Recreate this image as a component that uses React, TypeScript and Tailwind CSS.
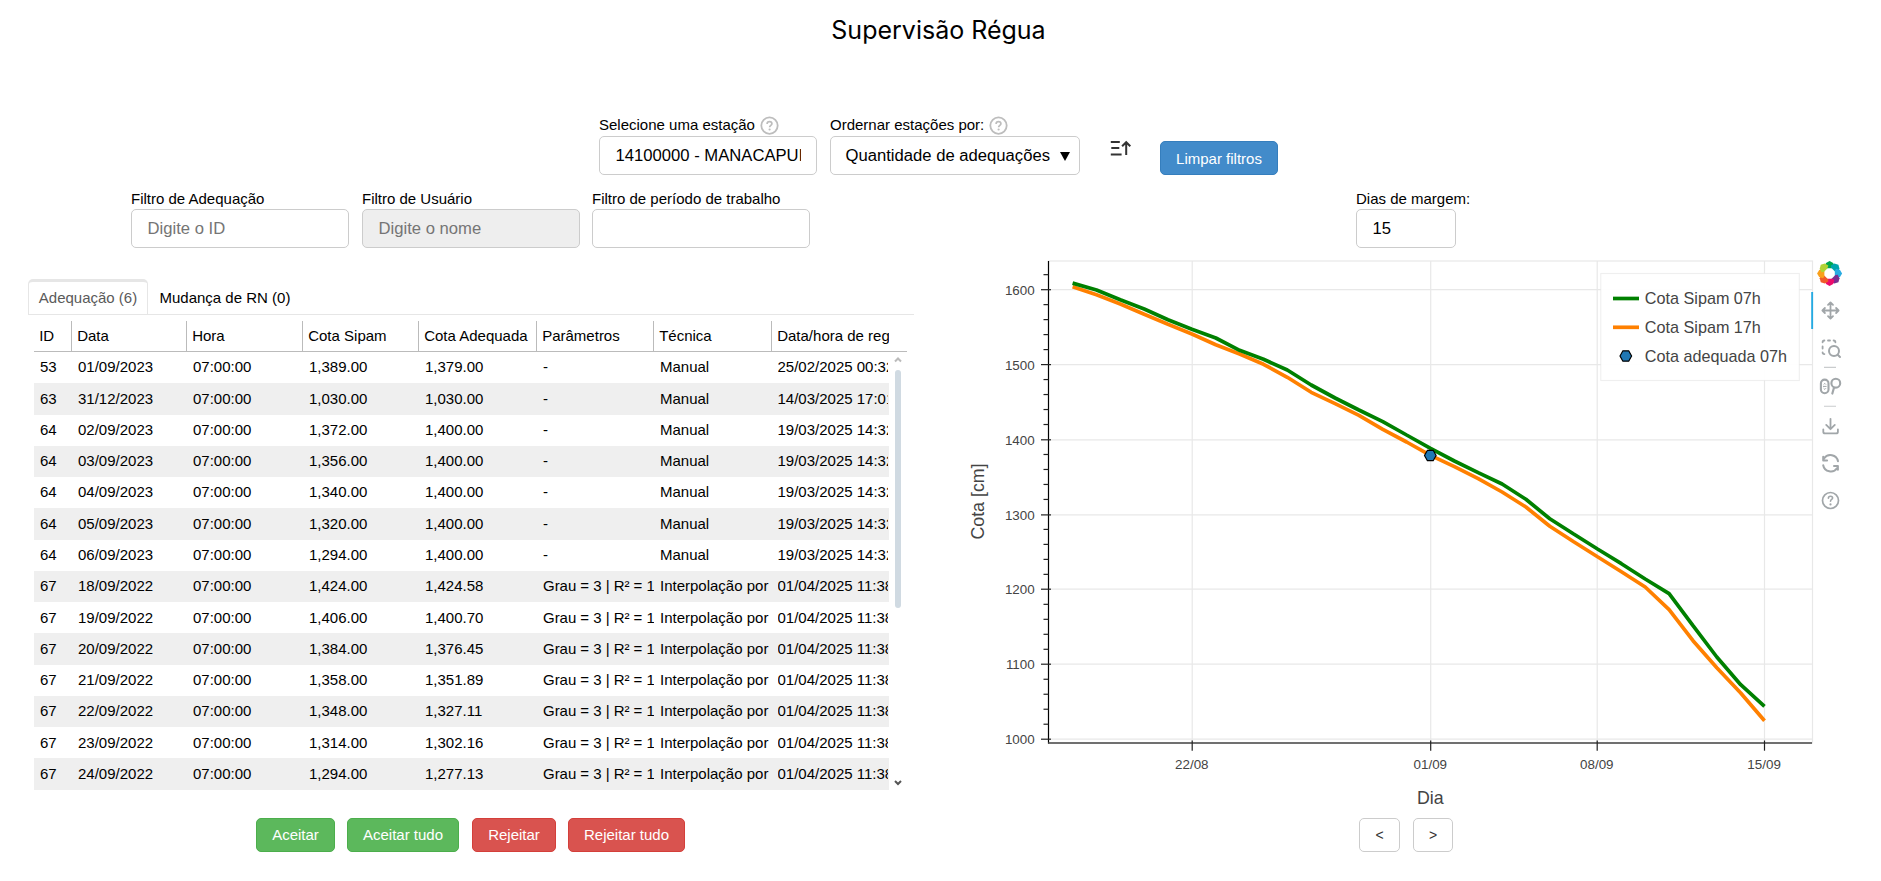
import React from 'react';

const X0 = 1072.6;
const DAY = 23.86;

const green = [283.1, 290, 299.7, 309, 319.7, 329.3, 338, 350.3, 359.3, 370, 385, 398, 410, 421.7, 435, 448.3, 461, 472.7, 484, 499.3, 518.7, 534, 549, 563.7, 579, 593.7, 625.7, 657, 684.7, 706.3];
const orange = [286.7, 294.7, 304, 314.3, 324.3, 334, 344.7, 354, 364.3, 377.3, 392.3, 403.7, 415.3, 429.3, 442, 455.3, 466.7, 478.7, 492, 507, 526.3, 541.7, 556.7, 571.7, 587, 609.7, 640.7, 667.7, 693, 720.7];
const toPoints = (ys: number[]) => ys.map((y, i) => `${(X0 + i * DAY).toFixed(1)},${y}`).join(' ');

const yMajor: [string, number][] = [
  ['1600', 289.7], ['1500', 364.6], ['1400', 439.8], ['1300', 514.9], ['1200', 589.2], ['1100', 664.2], ['1000', 739.2],
];
const xMajor: [string, number][] = [['22/08', 1192.2], ['01/09', 1430.7], ['08/09', 1597.2], ['15/09', 1764.5]];
const yMinor = Array.from({ length: 32 }, (_, i) => i).filter((i) => i % 5 !== 0).map((i) => 739.2 - i * 14.985);

const interp = 'Interpolação por';
const grau = 'Grau = 3 | R² = 1';
const rows: string[][] = [
  ['53', '01/09/2023', '07:00:00', '1,389.00', '1,379.00', '-', 'Manual', '25/02/2025 00:32'],
  ['63', '31/12/2023', '07:00:00', '1,030.00', '1,030.00', '-', 'Manual', '14/03/2025 17:01'],
  ['64', '02/09/2023', '07:00:00', '1,372.00', '1,400.00', '-', 'Manual', '19/03/2025 14:32'],
  ['64', '03/09/2023', '07:00:00', '1,356.00', '1,400.00', '-', 'Manual', '19/03/2025 14:32'],
  ['64', '04/09/2023', '07:00:00', '1,340.00', '1,400.00', '-', 'Manual', '19/03/2025 14:32'],
  ['64', '05/09/2023', '07:00:00', '1,320.00', '1,400.00', '-', 'Manual', '19/03/2025 14:32'],
  ['64', '06/09/2023', '07:00:00', '1,294.00', '1,400.00', '-', 'Manual', '19/03/2025 14:32'],
  ['67', '18/09/2022', '07:00:00', '1,424.00', '1,424.58', grau, interp, '01/04/2025 11:38'],
  ['67', '19/09/2022', '07:00:00', '1,406.00', '1,400.70', grau, interp, '01/04/2025 11:38'],
  ['67', '20/09/2022', '07:00:00', '1,384.00', '1,376.45', grau, interp, '01/04/2025 11:38'],
  ['67', '21/09/2022', '07:00:00', '1,358.00', '1,351.89', grau, interp, '01/04/2025 11:38'],
  ['67', '22/09/2022', '07:00:00', '1,348.00', '1,327.11', grau, interp, '01/04/2025 11:38'],
  ['67', '23/09/2022', '07:00:00', '1,314.00', '1,302.16', grau, interp, '01/04/2025 11:38'],
  ['67', '24/09/2022', '07:00:00', '1,294.00', '1,277.13', grau, interp, '01/04/2025 11:38'],
];
const headers = ['ID', 'Data', 'Hora', 'Cota Sipam', 'Cota Adequada', 'Parâmetros', 'Técnica', 'Data/hora de registro'];
const gridCols = 'grid grid-cols-[38px_115px_116px_116px_118px_117px_118px_117px]';

function Help() {
  return (
    <svg className="h-[20px] w-[20px] shrink-0" viewBox="0 0 20 20" fill="none">
      <circle cx="9.5" cy="9.6" r="8.2" stroke="#bdbdbd" strokeWidth="1.8" />
      <path d="M7.1 7.9c0-1.5 1-2.3 2.4-2.3s2.4.8 2.4 2.1c0 1.6-2.3 1.8-2.3 3.5" stroke="#bdbdbd" strokeWidth="1.7" />
      <circle cx="9.6" cy="13.5" r="1.1" fill="#bdbdbd" />
    </svg>
  );
}

function Field({ label, help, width, children }: { label: string; help?: boolean; width: string; children?: React.ReactNode }) {
  return (
    <div className={width}>
      <div className={`flex h-[21px] items-center gap-[5px] whitespace-nowrap text-[15px] ${help ? '' : 'pt-[1px]'}`}>
        {label}
        {help && <Help />}
      </div>
      {children}
    </div>
  );
}

const box = 'flex h-[39px] items-center rounded-[5px] border border-[#ccc] px-[15.5px] text-[16.65px] whitespace-nowrap';
const btn = 'flex h-[34px] items-center justify-center rounded-[5px] border text-[15px] text-white';

function Hex({ x, y }: { x: number; y: number }) {
  return (
    <polygon
      points="-5.8,0 -2.9,-5.2 2.9,-5.2 5.8,0 2.9,5.2 -2.9,5.2"
      transform={`translate(${x} ${y})`}
      fill="#1f77b4"
      stroke="#000"
      strokeWidth="1.2"
    />
  );
}

const petals = ['#00a650', '#00a5ad', '#29abe2', '#7a2d90', '#ec0b6c', '#f15a29', '#f9a01b', '#b2d234'];

function Chart() {
  return (
    <svg className="block h-[560px] w-[921px] shrink-0" viewBox="960 255 921 560" fontFamily="Liberation Sans, Arial, sans-serif">
      <rect x="1048.5" y="261" width="764" height="482" fill="#fff" stroke="#e8e8e8" strokeWidth="1.2" />
      <g stroke="#e8e8e8" strokeWidth="1.2">
        {yMajor.map(([t, y]) => <line key={t} x1="1048" x2="1812" y1={y} y2={y} />)}
        {xMajor.map(([t, x]) => <line key={t} x1={x} x2={x} y1="261" y2="743" />)}
      </g>
      <g stroke="#222" strokeWidth="1.2">
        <line x1="1048.5" x2="1048.5" y1="261" y2="743.5" stroke="#000" />
        <line x1="1048" x2="1812" y1="743" y2="743" stroke="#444" strokeWidth="1.5" />
        {yMajor.map(([t, y]) => <line key={t} x1="1041" x2="1051" y1={y} y2={y} />)}
        {yMinor.map((y) => <line key={y} x1="1043.5" x2="1048.5" y1={y} y2={y} />)}
        {xMajor.map(([t, x]) => <line key={t} x1={x} x2={x} y1="740.5" y2="750.7" />)}
      </g>
      <g fill="#444" fontSize="13.4">
        {yMajor.map(([t, y]) => <text key={t} x="1034.7" y={y + 5} textAnchor="end">{t}</text>)}
        {xMajor.map(([t, x]) => <text key={t} x={x - 0.4} y="769" textAnchor="middle">{t}</text>)}
      </g>
      <text x="1430.3" y="804" fill="#444" fontSize="17.8" textAnchor="middle">Dia</text>
      <text transform="translate(983.8 501.5) rotate(-90)" fill="#444" fontSize="17.8" textAnchor="middle">Cota [cm]</text>
      <g fill="none" strokeWidth="3.7" strokeLinejoin="bevel">
        <polyline points={toPoints(orange)} stroke="#ff8000" />
        <polyline points={toPoints(green)} stroke="#008000" />
      </g>
      <Hex x={1430.3} y={455.5} />

      <rect x="1600.8" y="273.5" width="198.5" height="107" fill="#fff" fillOpacity="0.95" stroke="#e5e5e5" strokeOpacity="0.6" strokeWidth="1.1" />
      <line x1="1613" x2="1639" y1="298.5" y2="298.5" stroke="#008000" strokeWidth="3.7" />
      <line x1="1613" x2="1639" y1="327.3" y2="327.3" stroke="#ff8000" strokeWidth="3.7" />
      <Hex x={1625.8} y={356} />
      <g fill="#444" fontSize="16.2">
        <text x="1644.8" y="304.3">Cota Sipam 07h</text>
        <text x="1644.8" y="333.3">Cota Sipam 17h</text>
        <text x="1644.8" y="362.3">Cota adequada 07h</text>
      </g>

      <g transform="translate(1829.6 273.5)">
        {petals.map((c, i) => (
          <path key={c} d="M-4.8 -6.6 L-3.6 -10.4 L0 -12.5 L3.6 -10.4 L4.8 -6.6 L2 -5.2 L-3 -5.2 Z" fill={c} transform={`rotate(${i * 45})`} />
        ))}
      </g>
      <rect x="1811.2" y="292" width="1.9" height="37" fill="#26aae1" />
      <g stroke="#a1a6a9" strokeWidth="1.8" fill="none" strokeLinecap="round" strokeLinejoin="round">
        <path d="M1822.6 310.5h15.8M1830.5 302.6v15.8M1828 304.9l2.5-2.5 2.5 2.5M1828 316.1l2.5 2.5 2.5-2.5M1824.9 308l-2.5 2.5 2.5 2.5M1836.1 308l2.5 2.5-2.5 2.5" />
        <path d="M1822.6 342.3q0-1.8 1.8-1.8M1828 340.5h2M1833.6 340.5q1.8 0 1.8 1.8M1822.6 346.5v2M1822.6 352.3q0 1.8 1.8 1.8" />
        <circle cx="1834" cy="351" r="5" strokeWidth="2" />
        <path d="M1837.7 354.7l2.3 2.3" strokeWidth="2" />
        <rect x="1820.9" y="379.6" width="7.6" height="13.6" rx="3.8" strokeWidth="2.1" />
        <circle cx="1835.8" cy="383.2" r="4.4" strokeWidth="2.1" />
        <path d="M1834 387.6l-1.7 6" strokeWidth="2.1" />
        <path d="M1823.4 386.4h2.8M1823.9 384.3l.9-.9.9.9M1823.9 388.5l.9.9.9-.9" strokeWidth="1" />
        <path d="M1823.3 429.3v2.4q0 1.7 1.7 1.7h11.2q1.7 0 1.7-1.7v-2.4M1830.5 418.8v10.2M1826.2 424.9l4.3 4.3 4.3-4.3" />
        <path d="M1838 461.3a7.7 7.7 0 0 0-14-2.8M1823.2 456.8v3.7h3.9M1823.2 465.2a7.7 7.7 0 0 0 14 2.8M1837.9 469.8v-3.7h-3.9" strokeWidth="2" />
        <circle cx="1830.5" cy="500.5" r="8" strokeWidth="1.7" />
        <path d="M1828.4 498.2c0-1.2.9-2 2.1-2s2.1.7 2.1 1.8c0 1.5-2.1 1.5-2.1 3.2" strokeWidth="1.6" />
      </g>
      <circle cx="1830.5" cy="504.4" r="1.1" fill="#a1a6a9" />
      <path d="M1824 367.4h12M1824 406.3h12" stroke="#c9cccd" strokeWidth="1.1" />
    </svg>
  );
}

export default function App() {
  return (
    <div className="h-[881px] w-[1881px] overflow-hidden bg-white text-black [font-family:'Liberation_Sans',Arial,sans-serif]">
      <header className="flex h-[115px] justify-center pt-[12px] pr-[4px] text-[25px] leading-[36px] [font-family:Inter,sans-serif]">
        <h1>Supervisão Régua</h1>
      </header>

      <div className="flex h-[73px] pl-[599px]">
        <Field label="Selecione uma estação" help width="w-[218px]">
          <div className={`${box} pt-[1px]`}><span className="w-full overflow-hidden">14100000 - MANACAPURU</span></div>
        </Field>
        <div className="w-[13px]" />
        <Field label="Ordernar estações por:" help width="w-[250px]">
          <div className={`${box} justify-between !pr-[9px] !pl-[14.5px] pt-[1px]`}>
            Quantidade de adequações
            <svg className="h-[9px] w-[10px]" viewBox="0 0 10 9"><path d="M0 0h10L5 9z" /></svg>
          </div>
        </Field>
        <svg className="mt-[24px] ml-[29px] h-[20px] w-[24px]" viewBox="0 0 24 20" fill="none" stroke="#333" strokeWidth="2">
          <path d="M1.8 3h9M2.3 9h8M1.8 15.4h10.8M17.2 16V3M13.1 7.3L17.2 3.2L21.3 7.3" />
        </svg>
        <button className={`${btn} mt-[26px] ml-[27px] w-[118px] border-[#357ebd] bg-[#428bca] pt-[2px]`}>Limpar filtros</button>
      </div>

      <div className="flex h-[67px] pl-[131px]">
        <Field label="Filtro de Adequação" width="w-[218px]">
          <div className={`${box} pt-[1px] text-[#757575]`}>Digite o ID</div>
        </Field>
        <div className="w-[13px]" />
        <Field label="Filtro de Usuário" width="w-[218px]">
          <div className={`${box} bg-[#eee] pt-[1px] text-[#757575]`}>Digite o nome</div>
        </Field>
        <div className="w-[12px]" />
        <Field label="Filtro de período de trabalho" width="w-[218px]">
          <div className={box} />
        </Field>
        <div className="w-[546px]" />
        <Field label="Dias de margem:" width="w-[100px]">
          <div className={`${box} pt-[1px]`}>15</div>
        </Field>
      </div>

      <div className="flex h-[563px]">
        <div className="w-[960px] shrink-0 pt-[24px] pl-[28px] text-[15px]">
          <div className="flex h-[36px] w-[886px] border-b border-[#e6e6e6]">
            <div className="flex w-[120px] items-center justify-center rounded-t-[5px] border border-t-[3px] border-b-0 border-[#e6e6e6] text-[#5a5a5a]">Adequação (6)</div>
            <div className="flex items-center pt-[3px] pl-[11.5px]">Mudança de RN (0)</div>
          </div>
          <div className="ml-[6px] w-[873px] pt-[6px]">
            <div className="h-[31px] border-b border-[#bbb]">
              <div className={`${gridCols} h-[30px] w-[855px]`}>
                {headers.map((h, i) => (
                  <div key={h} className={`flex items-center overflow-hidden pl-[5.2px] whitespace-nowrap ${i < 7 ? 'border-r border-[#bbb]' : ''}`}>{h}</div>
                ))}
              </div>
            </div>
            <div className="flex">
              <div className="w-[855px]">
                {rows.map((r, ri) => (
                  <div key={ri} className={`${gridCols} h-[31.27px] ${ri % 2 ? 'bg-[#efefef]' : ''}`}>
                    {r.map((c, i) => (
                      <div key={i} className={`flex items-center overflow-hidden whitespace-nowrap ${i === 7 ? 'mr-[1px] ml-[5.5px]' : i === 5 ? 'ml-[6px] tracking-[-0.03px]' : 'ml-[6px]'}`}>{c}</div>
                    ))}
                  </div>
                ))}
              </div>
              <div className="flex w-[18px] flex-col items-center">
                <svg className="mt-[4px] h-[7px] w-[8px]" viewBox="0 0 8 7" fill="none" stroke="#bbb" strokeWidth="2"><path d="M1 5.5L4 2.5L7 5.5" /></svg>
                <div className="mt-[7px] h-[238px] w-[6px] rounded-full bg-[#d0dae2]" />
                <svg className="mt-[171px] h-[7px] w-[8px]" viewBox="0 0 8 7" fill="none" stroke="#555" strokeWidth="2"><path d="M1 2L4 5L7 2" /></svg>
              </div>
            </div>
          </div>
        </div>
        <Chart />
      </div>

      <div className="flex h-[36px] pl-[256px]">
        <button className={`${btn} w-[79px] border-[#4cae4c] bg-[#5cb85c]`}>Aceitar</button>
        <button className={`${btn} ml-[12px] w-[112px] border-[#4cae4c] bg-[#5cb85c]`}>Aceitar tudo</button>
        <button className={`${btn} ml-[13px] w-[84px] border-[#d43f3a] bg-[#d9534f]`}>Rejeitar</button>
        <button className={`${btn} ml-[12px] w-[117px] border-[#d43f3a] bg-[#d9534f]`}>Rejeitar tudo</button>
        <button className="ml-[674px] h-[34px] w-[41px] rounded-[5px] border border-[#ccc] text-[14px] text-[#333]">&lt;</button>
        <button className="ml-[13px] h-[34px] w-[40px] rounded-[5px] border border-[#ccc] text-[14px] text-[#333]">&gt;</button>
      </div>
    </div>
  );
}
